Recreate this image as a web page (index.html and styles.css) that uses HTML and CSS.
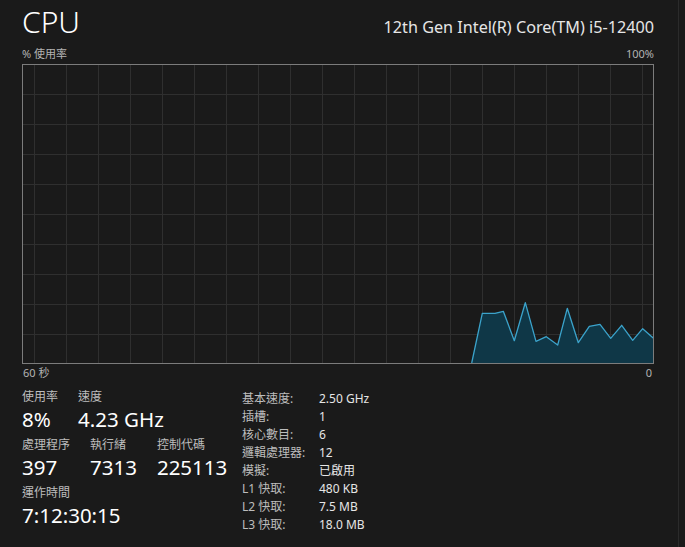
FILE: index.html
```html
<!DOCTYPE html>
<html lang="zh-Hant">
<head>
    <meta charset="UTF-8">
    <meta name="viewport" content="width=device-width, initial-scale=1.0">
    <title>CPU</title>
    <link rel="stylesheet" href="styles.css">
</head>
<body>
    <div class="window">
        <div class="main">
            <div class="header">
                <h1 class="title">CPU</h1>
                <div class="model">12th Gen Intel(R) Core(TM) i5-12400</div>
            </div>

            <div class="axis-row top">
                <span>% 使用率</span>
                <span>100%</span>
            </div>

            <svg class="graph" width="632" height="300" viewBox="0 0 632 300">
                <!-- grid -->
                <g stroke="#2f2f2f" stroke-width="1">
                    <line x1="12.5" y1="0" x2="12.5" y2="300"/>
                    <line x1="44.5" y1="0" x2="44.5" y2="300"/>
                    <line x1="76.5" y1="0" x2="76.5" y2="300"/>
                    <line x1="108.5" y1="0" x2="108.5" y2="300"/>
                    <line x1="140.5" y1="0" x2="140.5" y2="300"/>
                    <line x1="172.5" y1="0" x2="172.5" y2="300"/>
                    <line x1="204.5" y1="0" x2="204.5" y2="300"/>
                    <line x1="236.5" y1="0" x2="236.5" y2="300"/>
                    <line x1="268.5" y1="0" x2="268.5" y2="300"/>
                    <line x1="300.5" y1="0" x2="300.5" y2="300"/>
                    <line x1="332.5" y1="0" x2="332.5" y2="300"/>
                    <line x1="364.5" y1="0" x2="364.5" y2="300"/>
                    <line x1="396.5" y1="0" x2="396.5" y2="300"/>
                    <line x1="428.5" y1="0" x2="428.5" y2="300"/>
                    <line x1="460.5" y1="0" x2="460.5" y2="300"/>
                    <line x1="492.5" y1="0" x2="492.5" y2="300"/>
                    <line x1="524.5" y1="0" x2="524.5" y2="300"/>
                    <line x1="556.5" y1="0" x2="556.5" y2="300"/>
                    <line x1="588.5" y1="0" x2="588.5" y2="300"/>
                    <line x1="620.5" y1="0" x2="620.5" y2="300"/>
                    <line x1="0" y1="30.5" x2="632" y2="30.5"/>
                    <line x1="0" y1="60.5" x2="632" y2="60.5"/>
                    <line x1="0" y1="90.5" x2="632" y2="90.5"/>
                    <line x1="0" y1="120.5" x2="632" y2="120.5"/>
                    <line x1="0" y1="150.5" x2="632" y2="150.5"/>
                    <line x1="0" y1="180.5" x2="632" y2="180.5"/>
                    <line x1="0" y1="210.5" x2="632" y2="210.5"/>
                    <line x1="0" y1="240.5" x2="632" y2="240.5"/>
                    <line x1="0" y1="270.5" x2="632" y2="270.5"/>
                </g>
                <!-- usage -->
                <polygon fill="#0f3747" points="449.7,299 460.3,249.3 473,249.3 481.3,247.3 492.3,276.7 503.3,238.7 514,277.3 524.3,272.7 535.7,281 545.3,244.3 556.3,278.7 567.3,262.3 578,260.3 588.7,274.3 599.7,261.3 610.7,276.3 620.7,264.7 631.5,274.3 631.5,299"/>
                <polyline fill="none" stroke="#3ba3cb" stroke-width="1.3" stroke-linejoin="round" points="449.7,299 460.3,249.3 473,249.3 481.3,247.3 492.3,276.7 503.3,238.7 514,277.3 524.3,272.7 535.7,281 545.3,244.3 556.3,278.7 567.3,262.3 578,260.3 588.7,274.3 599.7,261.3 610.7,276.3 620.7,264.7 631.5,274.3"/>
                <rect x="0.5" y="0.5" width="631" height="299" fill="none" stroke="#7c7c7c" stroke-width="1"/>
            </svg>

            <div class="axis-row bottom">
                <span>60 秒</span>
                <span>0</span>
            </div>

            <div class="stats">
                <div class="live">
                    <div class="stat-row">
                        <div class="stat">
                            <div class="label">使用率</div>
                            <div class="value">8%</div>
                        </div>
                        <div class="stat">
                            <div class="label">速度</div>
                            <div class="value">4.23 GHz</div>
                        </div>
                    </div>
                    <div class="stat-row">
                        <div class="stat">
                            <div class="label">處理程序</div>
                            <div class="value">397</div>
                        </div>
                        <div class="stat">
                            <div class="label">執行緒</div>
                            <div class="value">7313</div>
                        </div>
                        <div class="stat">
                            <div class="label">控制代碼</div>
                            <div class="value">225113</div>
                        </div>
                    </div>
                    <div class="stat-row">
                        <div class="stat">
                            <div class="label">運作時間</div>
                            <div class="value">7:12:30:15</div>
                        </div>
                    </div>
                </div>

                <div class="specs">
                    <span class="key">基本速度:</span><span class="val">2.50 GHz</span>
                    <span class="key">插槽:</span><span class="val">1</span>
                    <span class="key">核心數目:</span><span class="val">6</span>
                    <span class="key">邏輯處理器:</span><span class="val">12</span>
                    <span class="key">模擬:</span><span class="val">已啟用</span>
                    <span class="key">L1 快取:</span><span class="val">480 KB</span>
                    <span class="key">L2 快取:</span><span class="val">7.5 MB</span>
                    <span class="key">L3 快取:</span><span class="val">18.0 MB</span>
                </div>
            </div>
        </div>
        <div class="divider"></div>
    </div>
</body>
</html>
```

FILE: styles.css
```css
body {
    margin: 0;
    background-color: #1a1a1a;
    color: #ffffff;
    font-family: "Noto Sans", "Noto Sans CJK TC", sans-serif;
}

.window {
    display: flex;
    height: 547px;
    overflow: hidden;
}

.main {
    width: 632px;
    padding-left: 22px;
}

.divider {
    width: 1px;
    margin-left: 24px;
    background-color: #2b2b2b;
}

.header {
    display: flex;
    justify-content: space-between;
    align-items: baseline;
    height: 46px;
}

.title {
    margin: 0;
    font-size: 30px;
    font-weight: 300;
    line-height: 44px;
}

.model {
    font-size: 16.2px;
    color: #e6e6e6;
}

.axis-row {
    display: flex;
    justify-content: space-between;
    font-size: 11px;
    color: #b3b3b3;
}

.axis-row.top {
    height: 18px;
    line-height: 15px;
}

.axis-row.bottom {
    height: 24px;
    line-height: 18px;
    padding: 0 2px 0 1px;
}

.graph {
    display: block;
}

.stats {
    display: flex;
}

.live {
    width: 220px;
}

.stat-row {
    display: flex;
    gap: 20px;
    margin-bottom: 4px;
}

.label {
    font-size: 12px;
    line-height: 18px;
    color: #bdbdbd;
}

.value {
    font-size: 20.5px;
    line-height: 26px;
}

.specs {
    display: grid;
    grid-template-columns: 77px auto;
    grid-auto-rows: 18px;
    font-size: 12px;
    line-height: 18px;
    padding-top: 2px;
}

.key {
    color: #bdbdbd;
}

.val {
    color: #e6e6e6;
}
```
